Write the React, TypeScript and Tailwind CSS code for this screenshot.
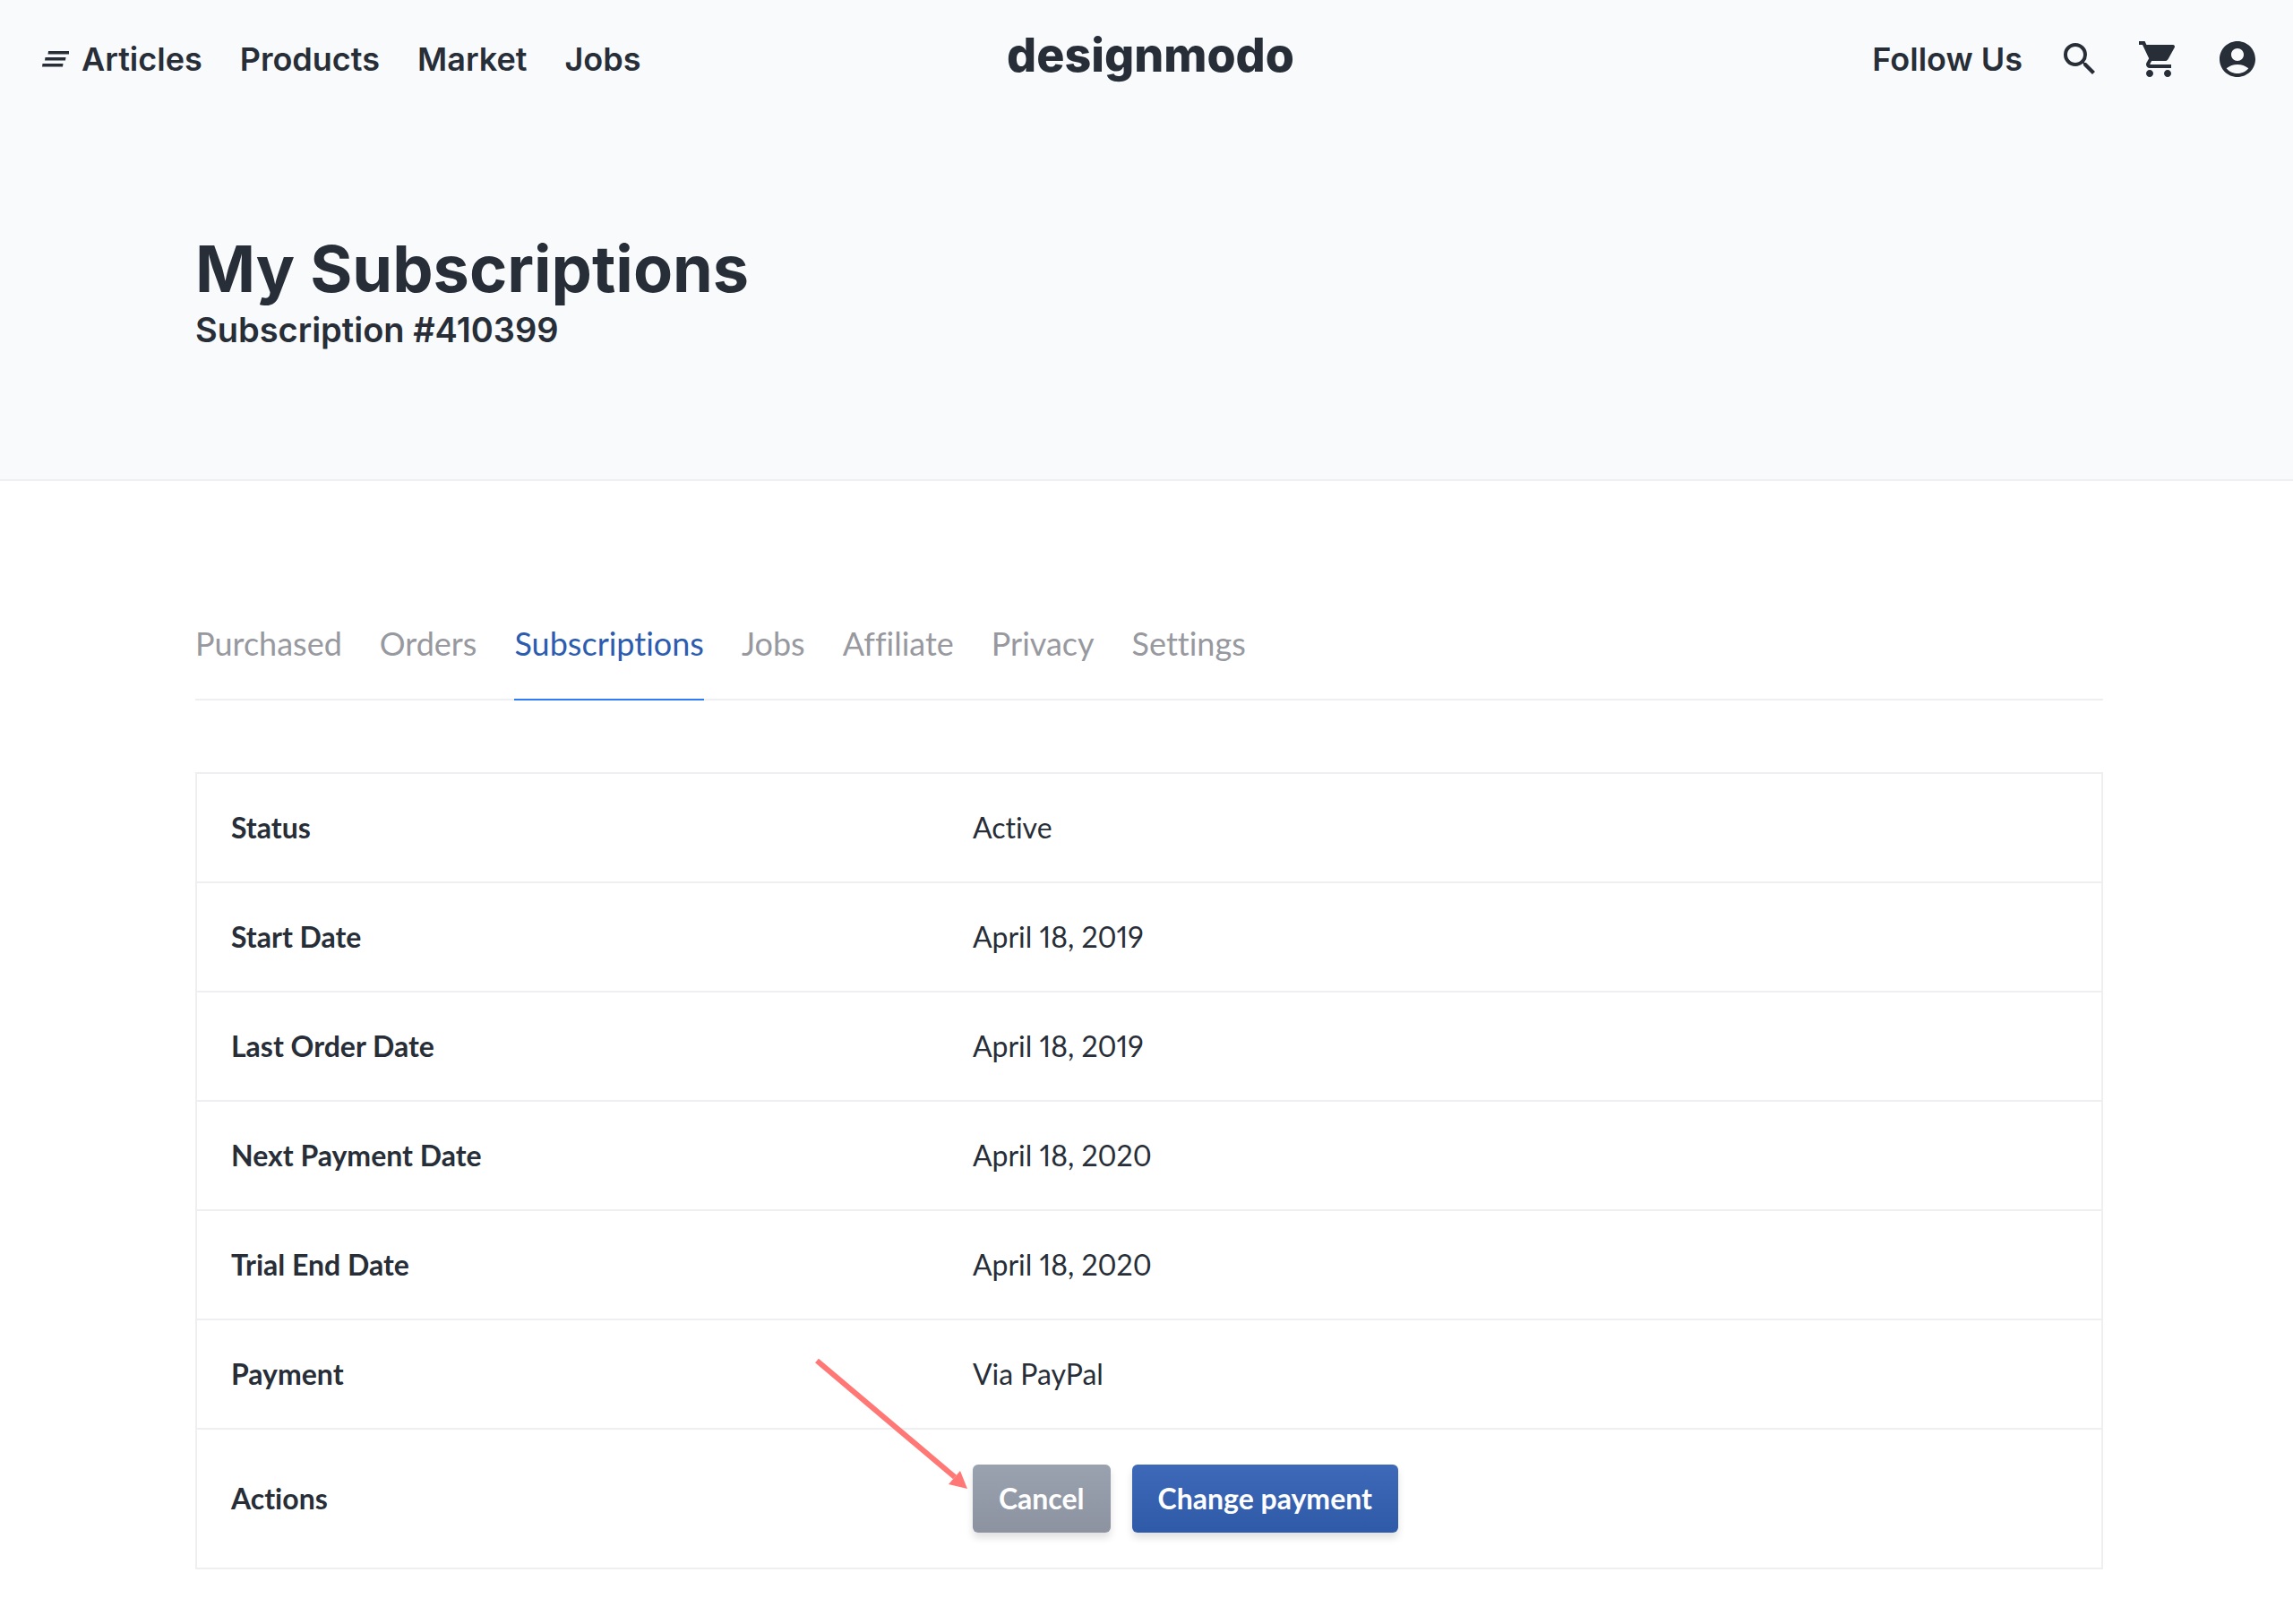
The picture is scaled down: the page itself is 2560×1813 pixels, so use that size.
import React from "react";
import { MdAccountCircle, MdSearch, MdShoppingCart } from "react-icons/md";

const navLinks = ["Articles", "Products", "Market", "Jobs"];

const tabs = ["Purchased", "Orders", "Subscriptions", "Jobs", "Affiliate", "Privacy", "Settings"];

const details = [
    { label: "Status", value: "Active" },
    { label: "Start Date", value: "April 18, 2019" },
    { label: "Last Order Date", value: "April 18, 2019" },
    { label: "Next Payment Date", value: "April 18, 2020" },
    { label: "Trial End Date", value: "April 18, 2020" },
    { label: "Payment", value: "Via PayPal" },
];

const MenuIcon: React.FC = () => (
    <svg viewBox="0 0 30 18" className="h-[18px] w-[30px]" fill="currentColor" aria-hidden="true">
        <path d="M7 0h23v3.5H6.5zM3.5 7h23l-.5 3.5H3zM.5 14h23l-.5 3.5H0z" />
    </svg>
);

const Arrow: React.FC = () => (
    <svg viewBox="0 0 172 148" className="pointer-events-none absolute right-full bottom-12 mr-1 h-[148px] w-[172px] max-w-none" aria-hidden="true">
        <path d="M2 4l154 130" stroke="#ff7875" strokeWidth="6" fill="none" />
        <path d="M170 147l-21-5 13-15z" fill="#ff7875" />
    </svg>
);

const Header: React.FC = () => (
    <header className="grid grid-cols-[1fr_auto_1fr] items-center pt-8 pr-[38px] pl-[47px] font-['Inter',sans-serif] text-[36px] leading-[60px] font-semibold">
        <nav className="flex items-center gap-[42px]">
            <a href="#articles" className="flex items-center gap-[14px]">
                <MenuIcon />
                {navLinks[0]}
            </a>
            {navLinks.slice(1).map((link) => (
                <a key={link} href={`#${link.toLowerCase()}`}>{link}</a>
            ))}
        </nav>

        <a href="#home" className="pb-2 text-[52px] font-extrabold">designmodo</a>

        <div className="flex items-center justify-end gap-10">
            <a href="#follow">Follow Us</a>
            <button type="button" aria-label="Search"><MdSearch className="size-12" /></button>
            <button type="button" aria-label="Cart"><MdShoppingCart className="size-12" /></button>
            <button type="button" aria-label="Account"><MdAccountCircle className="size-12" /></button>
        </div>
    </header>
);

const App: React.FC = () => {
    return (
        <div className="min-h-screen bg-white text-[#272e38] antialiased">
            {/* Top bar and page title */}
            <div className="border-b-2 border-[#eeeff2] bg-[#f9fafc] pb-[143px]">
                <Header />
                <div className="pt-[156px] pr-[212px] pl-[218px] font-['Inter',sans-serif]">
                    <h1 className="text-[72px] leading-[88px] font-bold">My Subscriptions</h1>
                    <p className="text-[38px] leading-[48px] font-semibold">Subscription #410399</p>
                </div>
            </div>

            <main className="pt-[143px] pr-[212px] pb-[60px] pl-[218px] font-['Lato',sans-serif] [font-variant-ligatures:none]">
                {/* Account tabs */}
                <nav className="flex gap-[42px] border-b-2 border-[#efeff1] text-[36px] leading-[76px] text-[#97999f]">
                    {tabs.map((tab) => (
                        <a
                            key={tab}
                            href={`#${tab.toLowerCase()}`}
                            className={tab === "Subscriptions" ? "-mb-0.5 border-b-2 border-[#2f7bf5] pb-6 text-[#2c5cb0]" : "pb-6"}
                        >
                            {tab}
                        </a>
                    ))}
                </nav>

                {/* Subscription details */}
                <table className="mt-20 w-full border-collapse border-2 border-[#efeff1] text-left text-[32px] leading-[48px] proportional-nums">
                    <tbody>
                        {details.map(({ label, value }) => (
                            <tr key={label} className="h-[122px] border-b-2 border-[#efeff1]">
                                <th scope="row" className="w-[39%] pl-[38px] font-bold">{label}</th>
                                <td className="pl-[37px]">{value}</td>
                            </tr>
                        ))}
                        <tr className="h-[156px]">
                            <th scope="row" className="pl-[38px] font-bold">Actions</th>
                            <td className="pl-[37px]">
                                <div className="relative flex gap-6 font-bold text-white">
                                    <Arrow />
                                    <button type="button" className="h-[76px] rounded-md bg-linear-to-b from-[#9aa2af] to-[#8c92a0] px-[29px] shadow-[0_6px_8px_rgba(0,0,0,0.12)]">Cancel</button>
                                    <button type="button" className="h-[76px] rounded-md bg-linear-to-b from-[#3d69b8] to-[#2f5aa8] px-[29px] shadow-[0_6px_8px_rgba(0,0,0,0.12)]">Change payment</button>
                                </div>
                            </td>
                        </tr>
                    </tbody>
                </table>
            </main>
        </div>
    );
};

export default App;
